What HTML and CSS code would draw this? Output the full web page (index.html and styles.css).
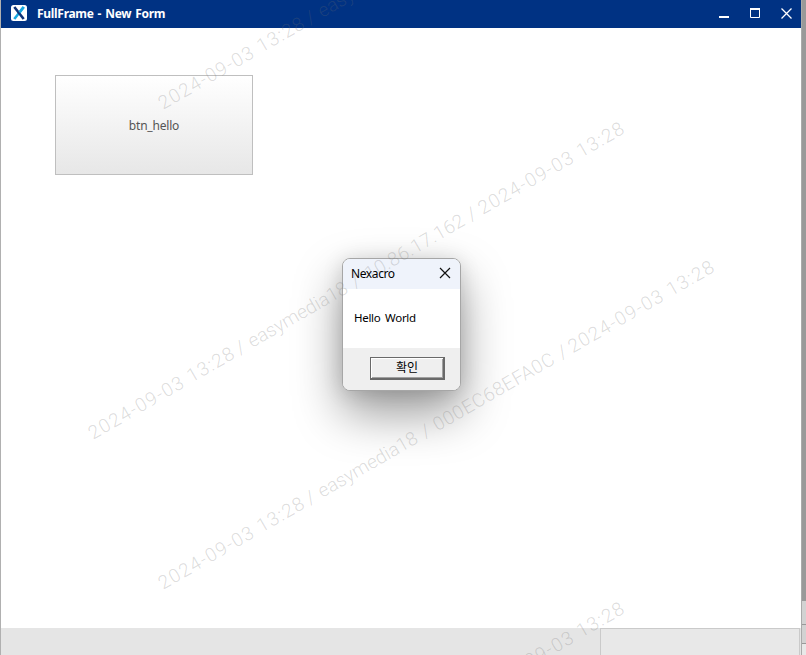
FILE: index.html
```
<!DOCTYPE html>
<html lang="ko">
<head>
    <meta charset="UTF-8">
    <meta name="viewport" content="width=device-width, initial-scale=1.0">
    <title>FullFrame - New Form</title>
    <link rel="stylesheet" href="styles.css">
</head>
<body>
    <div class="window">
        <header class="titlebar">
            <svg class="logo" width="16" height="16" viewBox="0 0 16 16">
                <rect width="16" height="16" rx="2.5" fill="#fff"/>
                <path d="M12.700 2L3.300 14" stroke="#18a8e0" stroke-width="2.600"/>
                <path d="M3.300 2l9.400 12" stroke="#103377" stroke-width="2.600"/>
                <path d="M12.700 2L8.500 7.400" stroke="#18a8e0" stroke-width="2.600"/>
            </svg>
            <h1>FullFrame - New Form</h1>
            <div class="controls">
                <svg width="11" height="11" viewBox="0 0 11 11"><path d="M0 9h10" stroke="#fff" stroke-width="2"/></svg>
                <svg width="11" height="11" viewBox="0 0 11 11"><path d="M.5 1h9v8.500h-9z" fill="none" stroke="#fff"/><path d="M0 1h10" stroke="#fff" stroke-width="2"/></svg>
                <svg width="11" height="11" viewBox="0 0 11 11"><path d="M.5.5l10 10M10.500.5l-10 10" stroke="#fff" stroke-width="1.300"/></svg>
            </div>
        </header>
        <main class="form">
            <button class="btn-hello" type="button">btn_hello</button>
        </main>
        <footer class="statusbar">
            <div class="status-panel"></div>
        </footer>
    </div>
    <aside class="edge">
        <div class="edge-dark"></div>
        <div class="edge-cell"></div>
        <div class="edge-cell short"></div>
    </aside>

    <div class="dialog">
        <div class="dialog-title">
            <span>Nexacro</span>
            <svg width="12" height="12" viewBox="0 0 12 12"><path d="M1 1l10 10M11 1L1 11" stroke="#111" stroke-width="1.200"/></svg>
        </div>
        <div class="dialog-body"><span>Hello World</span></div>
        <div class="dialog-footer">
            <button class="btn-ok" type="button">확인</button>
        </div>
    </div>

    <!-- marca d'água -->
    <svg class="watermark" width="806" height="655">
        <g transform="translate(163 110) rotate(-30)">
            <text x="0" textLength="165">2024-09-03 13:28</text>
            <text x="170">/</text>
            <text x="184" textLength="112">easymedia18</text>
        </g>
        <g transform="translate(93 440) rotate(-30)">
            <text x="0" textLength="165">2024-09-03 13:28</text>
            <text x="170">/</text>
            <text x="184" textLength="112">easymedia18</text>
            <text x="303">/</text>
            <text x="319" textLength="112">10.86.17.162</text>
            <text x="437">/</text>
            <text x="450" textLength="165">2024-09-03 13:28</text>
        </g>
        <g transform="translate(163 590) rotate(-30)">
            <text x="0" textLength="165">2024-09-03 13:28</text>
            <text x="170">/</text>
            <text x="184" textLength="112">easymedia18</text>
            <text x="303">/</text>
            <text x="317" textLength="137">000EC68EFA0C</text>
            <text x="461">/</text>
            <text x="473" textLength="165">2024-09-03 13:28</text>
        </g>
        <g transform="translate(93 920) rotate(-30)">
            <text x="450" textLength="165">2024-09-03 13:28</text>
        </g>
    </svg>
</body>
</html>
```
FILE: styles.css
```
* {
    box-sizing: border-box;
}
body {
    margin: 0;
    height: 655px;
    display: flex;
    overflow: hidden;
    background: #fff;
    font-family: "Noto Sans", "Noto Sans CJK KR", sans-serif;
    font-size: 12px;
}
button {
    font-family: inherit;
    font-size: 12px;
    padding: 0;
}
.window {
    width: 801px;
    display: flex;
    flex-direction: column;
    border-left: 1px solid #b0b0b0;
}
.titlebar {
    height: 28px;
    display: flex;
    align-items: center;
    padding: 0 9px 2px 10px;
    background: #003283;
    color: #fff;
}
.titlebar h1 {
    margin: 0 0 0 10px;
    font-size: 12px;
    font-weight: bold;
    letter-spacing: -0.3px;
    word-spacing: 1.2px;
}
.controls {
    display: flex;
    gap: 20px;
    margin-left: auto;
}
.form {
    flex: 1;
    padding: 47px 54px;
}
.btn-hello {
    width: 198px;
    height: 100px;
    border: 1px solid #bfbfbf;
    background: linear-gradient(#fff, #e7e7e7);
    color: #555;
    letter-spacing: -0.2px;
}
.statusbar {
    height: 27px;
    display: flex;
    justify-content: flex-end;
    padding-right: 1px;
    background: #e5e5e5;
}
.status-panel {
    width: 200px;
    border: 1px solid #cacaca;
    border-bottom: none;
    background: #e8e8e8;
}

/* borda da janela de trás */
.edge {
    width: 5px;
    border-left: 1px solid #aaa;
    background: #e8e8e8;
}
.edge-dark {
    height: 601px;
    background: #999;
}
.edge-cell {
    height: 24px;
    border-bottom: 1px solid #999;
    background: #d2d2d2;
}
.edge-cell.short {
    height: 19px;
}

.dialog {
    position: absolute;
    left: 342px;
    top: 258px;
    width: 119px;
    height: 133px;
    display: flex;
    flex-direction: column;
    overflow: hidden;
    border: 1px solid #a6a6a6;
    border-radius: 8px;
    background: #fff;
    color: #000;
    box-shadow: 0 22px 48px rgba(0, 0, 0, 0.4), 0 2px 20px rgba(0, 0, 0, 0.13);
}
.dialog-title {
    height: 30px;
    display: flex;
    align-items: center;
    justify-content: space-between;
    padding: 0 9px 1px 8px;
    background: #eff3fb;
    letter-spacing: -0.4px;
}
.dialog-title svg {
    margin-top: -1px;
}
.dialog-body {
    flex: 1;
    display: flex;
    align-items: center;
    padding: 0 0 3px 11px;
    font-size: 11.5px;
    letter-spacing: -0.3px;
    word-spacing: 2px;
}
.dialog-footer {
    height: 42px;
    padding: 9px 15px 0 0;
    text-align: right;
    background: #efefef;
}
.btn-ok {
    width: 75px;
    height: 23px;
    display: block;
    margin-left: auto;
    padding-bottom: 2px;
    border: 1px solid #696969;
    border-right-width: 2px;
    border-bottom-width: 2px;
    background: #efefef;
    box-shadow: inset 1px 1px #fff, inset -1px -1px #a0a0a0;
    color: #000;
}

.watermark {
    position: absolute;
    left: 0;
    top: 0;
    pointer-events: none;
}
.watermark text {
    font-family: Roboto, sans-serif;
    font-size: 19px;
    font-weight: 300;
    fill: rgba(110, 110, 110, 0.24);
}
```
